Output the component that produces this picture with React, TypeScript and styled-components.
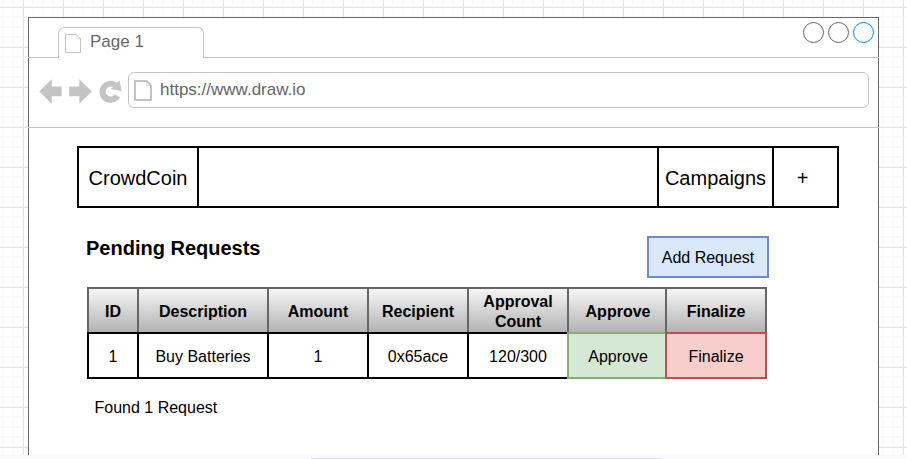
import React from 'react';
import styled, { createGlobalStyle } from 'styled-components';

const GlobalStyle = createGlobalStyle`
  * { box-sizing: border-box; }
  body {
    margin: 0;
    background: #f8f9fa;
    font-family: "Liberation Sans", Arial, sans-serif;
    color: #000;
    overflow: hidden;
  }
`;

const Page = styled.div`
  height: 459px;
  overflow: hidden;
  display: flex;
  flex-direction: column;
`;

const Canvas = styled.main`
  height: 455px;
  flex: none;
  overflow: hidden;
  padding: 17px 28px 0;
  background-color: #fff;
  background-image:
    linear-gradient(90deg, #e4e4e4 1px, transparent 1px),
    linear-gradient(#e4e4e4 1px, transparent 1px),
    linear-gradient(90deg, #fafafa 2px, transparent 2px),
    linear-gradient(#fafafa 2px, transparent 2px);
  background-size: 40px 40px, 40px 40px, 10px 10px, 10px 10px;
  background-position: 23px 7px, 23px 7px, 2px 6px, 2px 6px;
`;

const ScrollThumb = styled.div`
  width: 355px;
  height: 8px;
  flex: none;
  margin: 3px 0 0 309px;
  border-radius: 4px;
  background: #dadce0;
`;

const Browser = styled.section`
  width: 851px;
  height: 460px;
  background: #fff;
  border: 1px solid #666;
`;

const TabStrip = styled.div`
  display: flex;
  justify-content: space-between;
  align-items: flex-start;
  height: 40px;
  margin: 0 -1px;
  padding: 0 5px 0 30px;
  border-bottom: 1px solid #c4c4c4;
`;

const Tab = styled.div`
  display: flex;
  width: 146px;
  height: 31px;
  margin-top: 9px;
  padding: 6px 0 0 6px;
  gap: 9px;
  background: #fff;
  border: 1px solid #c4c4c4;
  border-bottom: 0;
  border-radius: 6px 6px 0 0;
`;

const ChromeText = styled.span`
  font-size: 17px;
  line-height: 20px;
  color: #666;
`;

const TabTitle = styled(ChromeText)`
  margin-top: -2px;
`;

const WindowControls = styled.div`
  display: flex;
  gap: 4px;
  margin-top: 4px;
`;

const Control = styled.span<{ $color: string }>`
  width: 21px;
  height: 21px;
  border: 1px solid ${(p) => p.$color};
  border-radius: 50%;
`;

const Toolbar = styled.div`
  display: flex;
  align-items: flex-start;
  height: 70px;
  margin: 0 -1px;
  padding: 14px 10px 0 11px;
  border-bottom: 1px solid #c4c4c4;
`;

const NavIcons = styled.svg`
  flex: none;
  width: 89px;
  height: 36px;
  fill: #c4c4c4;
`;

const AddressBar = styled.div`
  display: flex;
  flex: 1;
  height: 36px;
  padding: 7px 0 0 5px;
  gap: 8px;
  border: 1px solid #c4c4c4;
  border-radius: 6px;
`;

const DocSvg = styled.svg`
  flex: none;
  fill: none;
  stroke: #c4c4c4;
`;

const Content = styled.div`
  padding: 18px 39px 0 48px;
`;

const NavBar = styled.nav`
  display: grid;
  grid-template-columns: 120px 460px 115px 63px;
  height: 62px;
  border: 2px solid #000;
`;

const NavItem = styled.div`
  display: flex;
  align-items: center;
  justify-content: center;
  padding-top: 2px;
  font-size: 20px;
  line-height: 24px;
  border-right: 2px solid #000;

  &:last-child {
    border-right: 0;
    padding-right: 6px;
  }
`;

const HeadingRow = styled.header`
  display: flex;
  justify-content: space-between;
  align-items: flex-start;
  height: 51px;
  margin: 28px 70px 0 9px;
`;

const Title = styled.h1`
  margin: 0;
  font-size: 20px;
  line-height: 24px;
`;

const AddButton = styled.button`
  width: 122px;
  height: 42px;
  padding: 2px 0 0;
  font: 16px/20px "Liberation Sans", Arial, sans-serif;
  color: #000;
  background: #dae8fc;
  border: 2px solid #6c8ebf;
`;

const Table = styled.div`
  width: 680px;
  margin-left: 10px;
  font-size: 16px;
  line-height: 20px;
`;

const Row = styled.div`
  display: grid;
  grid-template-columns: 50px 130px 100px 100px 100px 98px 100px;
  padding-right: 2px;

  & + & {
    margin-top: -2px;
  }
`;

const tones = {
  plain: { fill: '#fff', line: '#000', inset: 0 },
  approve: { fill: '#d5e8d4', line: '#82b366', inset: 2 },
  finalize: { fill: '#f8cecc', line: '#b85450', inset: 0 },
};

type Tone = keyof typeof tones;

const Cell = styled.div<{ $tone?: Tone }>`
  display: flex;
  align-items: center;
  justify-content: center;
  height: 47px;
  margin-right: -2px;
  padding-top: 2px;
  padding-left: ${(p) => tones[p.$tone ?? 'plain'].inset}px;
  text-align: center;
  background: ${(p) => tones[p.$tone ?? 'plain'].fill};
  border: 2px solid ${(p) => tones[p.$tone ?? 'plain'].line};
`;

const HeadCell = styled(Cell)`
  font-weight: bold;
  background: linear-gradient(#f5f5f5, #b3b3b3);
  border-color: #666;

  &:nth-child(6) {
    padding-left: 2px;
  }
`;

const Summary = styled.p`
  margin: 19px 0 0 17.5px;
  font-size: 16px;
  line-height: 20px;
`;

const columns = ['ID', 'Description', 'Amount', 'Recipient', 'Approval Count', 'Approve', 'Finalize'];

const cells: { text: string; tone?: Tone }[] = [
  { text: '1' },
  { text: 'Buy Batteries' },
  { text: '1' },
  { text: '0x65ace' },
  { text: '120/300' },
  { text: 'Approve', tone: 'approve' },
  { text: 'Finalize', tone: 'finalize' },
];

export default function App() {
  return (
    <>
      <GlobalStyle />
      <Page>
        <Canvas>
          <Browser>
            <TabStrip>
              <Tab>
                <DocSvg width="16" height="19" viewBox="0 0 16 19">
                  <path d="M.5 .5H11.2L15.5 4.8V18.5H.5Z" />
                  <path d="M11.2 .5V4.8H15.5" strokeOpacity=".5" />
                </DocSvg>
                <TabTitle>Page 1</TabTitle>
              </Tab>
              <WindowControls>
                <Control $color="#666" />
                <Control $color="#666" />
                <Control $color="#008cff" />
              </WindowControls>
            </TabStrip>
            <Toolbar>
              <NavIcons viewBox="39 72 89 36">
                <path d="M39.2 91.5 51.7 79.3V86.5H61.6V96.2H51.7V103.7Z" />
                <path d="M91.8 91.5 79.3 79.3V86.5H69.2V96.2H79.3V103.7Z" />
                <path d="M116.8 82.8 119.6 80.7 121.6 91 110.6 89 113.2 87.3A5 5 0 1 0 114.9 94.2L120 97.4A11 11 0 1 1 116.8 82.8Z" />
              </NavIcons>
              <AddressBar>
                <DocSvg width="18" height="21" viewBox="0 0 18 21">
                  <path d="M1 1H12.6L17 5.4V20H1Z" strokeWidth="2" />
                  <path d="M12.2 1.5V5.6H16.5" strokeOpacity=".6" />
                </DocSvg>
                <ChromeText>https://www.draw.io</ChromeText>
              </AddressBar>
            </Toolbar>
            <Content>
              <NavBar>
                <NavItem>CrowdCoin</NavItem>
                <NavItem />
                <NavItem>Campaigns</NavItem>
                <NavItem>+</NavItem>
              </NavBar>
              <HeadingRow>
                <Title>Pending Requests</Title>
                <AddButton>Add Request</AddButton>
              </HeadingRow>
              <Table>
                <Row>
                  {columns.map((name) => (
                    <HeadCell key={name}>{name}</HeadCell>
                  ))}
                </Row>
                <Row>
                  {cells.map((cell, i) => (
                    <Cell key={i} $tone={cell.tone}>{cell.text}</Cell>
                  ))}
                </Row>
              </Table>
              <Summary>Found 1 Request</Summary>
            </Content>
          </Browser>
        </Canvas>
        <ScrollThumb />
      </Page>
    </>
  );
}
